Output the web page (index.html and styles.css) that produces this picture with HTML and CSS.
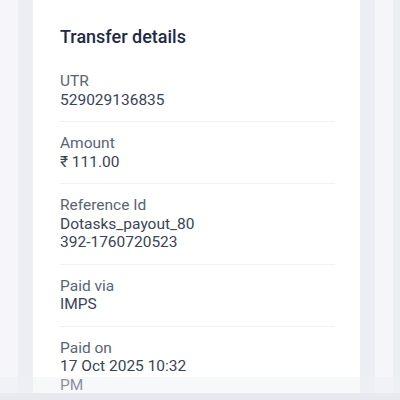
FILE: index.html
```html
<!DOCTYPE html>
<html lang="en">
<head>
    <meta charset="UTF-8">
    <meta name="viewport" content="width=device-width, initial-scale=1.0">
    <title>Transfer details</title>
    <link rel="stylesheet" href="styles.css">
</head>
<body>

<div class="page">
    <div class="gutter"></div>
    <div class="panel">
        <div class="card">
            <h2 class="card-title">Transfer details</h2>

            <div class="row">
                <div class="label">UTR</div>
                <div class="value">529029136835</div>
            </div>
            <div class="row">
                <div class="label">Amount</div>
                <div class="value">₹ 111.00</div>
            </div>
            <div class="row">
                <div class="label">Reference Id</div>
                <div class="value">Dotasks_payout_80392-1760720523</div>
            </div>
            <div class="row">
                <div class="label">Paid via</div>
                <div class="value">IMPS</div>
            </div>
            <div class="row">
                <div class="label">Paid on</div>
                <div class="value">17 Oct 2025 10:32 PM</div>
            </div>
        </div>
    </div>
    <div class="gutter"></div>
    <div class="edge"></div>
</div>

<!-- bottom bar peeking in -->
<div class="bottom-bar">
    <div class="bottom-fade"></div>
    <div class="bottom-strip"></div>
</div>

</body>
</html>
```

FILE: styles.css
```css
body {
    margin: 0;
    font-family: Roboto, "Noto Sans", Arial, sans-serif;
    background-color: #f5f5fa;
    overflow: hidden;
}
.page {
    display: flex;
    height: 400px;
    overflow: hidden;
}
.gutter {
    width: 18px;
    flex-shrink: 0;
    background-color: #f5f5fa;
}
.edge {
    width: 7px;
    flex-shrink: 0;
    background-color: #eceef2;
}
.panel {
    width: 327px;
    padding: 0 15px;
    background-color: #eceef3;
}
.card {
    background-color: white;
    padding: 25px 25px 40px 27px;
    min-height: 400px;
    box-sizing: border-box;
}
.card-title {
    margin: 0 0 11px 0;
    font-size: 18px;
    line-height: 24px;
    font-weight: 500;
    color: #1e2a45;
}
.row {
    padding: 12px 0;
    border-bottom: 1px solid #f0f1f3;
    font-size: 15.5px;
    line-height: 18.5px;
}
.row:last-child {
    border-bottom: none;
}
.label {
    color: #5b6373;
}
.value {
    width: 140px;
    color: #3b4354;
    overflow-wrap: anywhere;
}
.bottom-bar {
    position: fixed;
    left: 0;
    right: 0;
    bottom: 0;
}
.bottom-fade {
    height: 16px;
    background-color: rgba(238, 239, 243, 0.45);
}
.bottom-strip {
    height: 7px;
    background-color: #e8e9ee;
}
```
